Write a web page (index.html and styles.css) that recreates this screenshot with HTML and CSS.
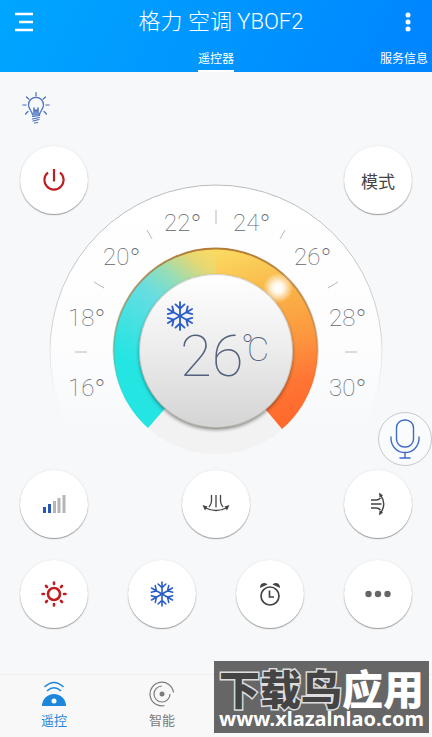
FILE: index.html
```html
<!DOCTYPE html>
<html lang="zh-CN">
<head>
<meta charset="utf-8">
<meta name="viewport" content="width=device-width, initial-scale=1">
<title>格力 空调 YBOF2</title>
<link rel="stylesheet" href="styles.css">
</head>
<body>
<svg class="symbols" aria-hidden="true">
  <symbol id="snow" viewBox="0 0 28 28">
    <g id="arms" fill="none" stroke="currentColor" stroke-width="1.7" stroke-linecap="round">
      <path id="arm" d="M14 14V1M9.800 3.200L14 7.200L18.200 3.200"/>
      <use href="#arm" transform="rotate(60 14 14)"/>
      <use href="#arm" transform="rotate(120 14 14)"/>
      <use href="#arm" transform="rotate(180 14 14)"/>
      <use href="#arm" transform="rotate(240 14 14)"/>
      <use href="#arm" transform="rotate(300 14 14)"/>
    </g>
  </symbol>
</svg>

<header class="top">
  <div class="bar">
    <button class="bar-btn" aria-label="菜单">
      <svg width="20" height="20" viewBox="0 0 20 20"><path d="M1 2H19M5 10H19M1 18H19" stroke="currentColor" stroke-width="2.400"/></svg>
    </button>
    <h1 class="title">格力 空调 YBOF2</h1>
    <button class="bar-btn bar-btn-end" aria-label="更多">
      <svg width="6" height="20" viewBox="0 0 6 20" fill="currentColor"><circle cx="3" cy="3" r="2.500"/><circle cx="3" cy="10" r="2.500"/><circle cx="3" cy="17" r="2.500"/></svg>
    </button>
  </div>
  <nav class="tabs">
    <a class="tab tab-on" href="#remote">遥控器</a>
    <a class="tab tab-end" href="#service">服务信息</a>
  </nav>
</header>

<main class="remote" id="remote">
  <button class="light" aria-label="灯光">
    <svg width="28" height="32" viewBox="0 0 28 32" fill="none" stroke="currentColor" stroke-width="1.200" stroke-linecap="round">
      <path d="M10.500 23C10.500 19 6.500 18 6.500 12.800A7.500 7.500 0 0 1 21.500 12.800C21.500 18 17.500 19 17.500 23"/>
      <path d="M14 .600V4M.800 13H4.200M23.800 13H27.200M4.500 5L7 7.200M23.500 5L21 7.200M3.500 22L6 19.500M24.500 22L22 19.500"/>
      <path d="M10.500 24.500L17.500 23.500M10.500 27L17.500 25.500M11 29L17 27.500M12.500 31L15.500 30.500"/>
      <path d="M12 16V23M16 16V23M14 18V23M12 18.500H16" stroke-width="1.500"/>
    </svg>
  </button>

  <div class="stage">
    <svg class="dial" viewBox="0 0 432 272" role="img" aria-label="26℃">
      <defs>
        <linearGradient id="face" x1="0" y1="0" x2="0" y2="1"><stop offset="0" stop-color="#fff"/><stop offset=".45" stop-color="#fdfdfe"/><stop offset=".75" stop-color="#fff" stop-opacity="0"/></linearGradient>
        <linearGradient id="rim" x1="0" y1="0" x2="0" y2="1"><stop offset="0" stop-color="#b9babc"/><stop offset=".45" stop-color="#d4d5d7"/><stop offset=".66" stop-color="#e4e5e7" stop-opacity="0"/></linearGradient>
        <linearGradient id="cool" gradientUnits="userSpaceOnUse" x1="216" y1="68" x2="128" y2="176"><stop offset="0" stop-color="#fbda62"/><stop offset=".14" stop-color="#e6d873"/><stop offset=".34" stop-color="#94ddb8"/><stop offset=".52" stop-color="#68dde0"/><stop offset="1" stop-color="#25e5e3"/></linearGradient>
        <linearGradient id="warm" gradientUnits="userSpaceOnUse" x1="216" y1="68" x2="274" y2="244"><stop offset="0" stop-color="#fbda62"/><stop offset=".3" stop-color="#f9b548"/><stop offset=".6" stop-color="#fd943e"/><stop offset=".8" stop-color="#ff7534"/><stop offset="1" stop-color="#ff692b"/></linearGradient>
        <linearGradient id="edge" x1="0" y1="0" x2="0" y2="1"><stop offset="0" stop-color="#a86a28" stop-opacity=".85"/><stop offset=".5" stop-color="#a07840" stop-opacity=".4"/><stop offset=".8" stop-color="#a07840" stop-opacity="0"/></linearGradient>
        <linearGradient id="knob" x1="0" y1="0" x2="0" y2="1"><stop offset="0" stop-color="#fff"/><stop offset=".5" stop-color="#ececec"/><stop offset="1" stop-color="#d4d4d4"/></linearGradient>
        <radialGradient id="glow"><stop offset="0" stop-color="#fff"/><stop offset=".35" stop-color="#fff" stop-opacity=".9"/><stop offset="1" stop-color="#fff" stop-opacity="0"/></radialGradient>
        <filter id="soft" x="-20%" y="-20%" width="140%" height="140%"><feGaussianBlur stdDeviation="2"/></filter>
      </defs>
      <circle cx="216" cy="167" r="166" fill="url(#face)" stroke="url(#rim)"/>
      <circle cx="216" cy="167" r="103" fill="#f2f2f2"/>
      <path d="M216 64A103 103 0 0 0 148 244L169 220A70 70 0 0 1 216 97Z" fill="url(#cool)"/>
      <path d="M215.500 64A103 103 0 0 1 282 245L261 220A70 70 0 0 0 215.500 97Z" fill="url(#warm)"/>
      <path d="M148 243A102 102 0 1 1 282 244" fill="none" stroke="url(#edge)" stroke-width="2"/>
      <circle cx="278" cy="104" r="15" fill="url(#glow)"/>
      <circle cx="216" cy="169" r="76" fill="#000" opacity=".6" filter="url(#soft)"/>
      <circle cx="216" cy="167" r="77" fill="url(#knob)"/>
      <circle cx="216" cy="167" r="76.500" fill="none" stroke="#8a7b62" stroke-opacity=".35"/>
      <path d="M216 26V40M147 46L152 55M285 46L280 55M94 98L104 104M338 98L328 104M75 168H87M345 168H357" stroke="#b9babd" fill="none"/>
      <g class="scale">
        <text x="68" y="212">16<tspan class="deg" dy="4">°</tspan></text>
        <text x="68" y="142">18<tspan class="deg" dy="4">°</tspan></text>
        <text x="103" y="81">20<tspan class="deg" dy="4">°</tspan></text>
        <text x="164" y="47">22<tspan class="deg" dy="4">°</tspan></text>
        <text x="233" y="47">24<tspan class="deg" dy="4">°</tspan></text>
        <text x="294" y="81">26<tspan class="deg" dy="4">°</tspan></text>
        <text x="329" y="142">28<tspan class="deg" dy="4">°</tspan></text>
        <text x="329" y="212">30<tspan class="deg" dy="4">°</tspan></text>
      </g>
      <use class="cold" href="#snow" x="165" y="117" width="30" height="30"/>
      <text class="temp" x="180" y="192">26</text>
      <text class="unit" x="241" y="174">°<tspan x="247" y="177">C</tspan></text>
    </svg>

    <div class="row row-top">
      <button class="key" aria-label="电源">
        <svg class="red" width="22" height="24" viewBox="0 0 22 24" fill="none" stroke="currentColor" stroke-width="2.200"><path d="M11 1V13.500M5 4.500A9.600 9.600 0 1 0 17 4.500"/></svg>
      </button>
      <button class="key key-text">模式</button>
    </div>
    <button class="mic" aria-label="语音">
      <svg width="30" height="40" viewBox="0 0 30 40" fill="none" stroke="currentColor" stroke-width="1.400"><rect x="6.500" y="1" width="17" height="27" rx="8"/><path d="M1 17.500V19.500A14 14 0 0 0 29 19.500V17.500M15 33.500V39M9.500 39H20.500"/></svg>
    </button>
  </div>

  <div class="row row-mid">
    <button class="key" aria-label="风量">
      <svg width="24" height="20" viewBox="0 0 24 20"><path d="M1 13h3v6h-3zM6 10h3v9h-3z" fill="#2557b8"/><path d="M11 7h3v12h-3zM15.500 4h3v15h-3zM20.500 1h3v18h-3z" fill="#b5b5b5"/></svg>
    </button>
    <button class="key" aria-label="左右扫风">
      <svg width="28" height="22" viewBox="0 0 28 22" fill="none" stroke="currentColor" stroke-width="1.300"><path d="M9.500 2V8Q9.500 11 7 14M14 2V14.500M18.500 2V8Q18.500 11 21 14"/><path d="M2.500 14.500Q14 20.500 25.500 14.500"/><path d="M.500 12L5.500 13.500L3 17.500ZM27.500 12L22.500 13.500L25 17.500Z" fill="currentColor" stroke="none"/></svg>
    </button>
    <button class="key" aria-label="上下扫风">
      <svg width="16" height="24" viewBox="0 0 16 24" fill="none" stroke="currentColor" stroke-width="1.400"><path d="M1 8H6Q9 8 10.500 6M1 12H11.500M1 16H6Q9 16 10.500 18M10.500 3Q17 12 10.500 21"/><path d="M9 .500L9.500 5.500L13 3.500ZM9 23.500L9.500 18.500L13 20.500Z" fill="currentColor" stroke="none"/></svg>
    </button>
  </div>

  <div class="row">
    <button class="key" aria-label="制热">
      <svg class="red" width="26" height="26" viewBox="0 0 26 26" fill="none" stroke="currentColor" stroke-width="2.600" stroke-linecap="round"><circle cx="13" cy="13" r="6"/><path d="M13 1.500V3M13 23V24.500M1.500 13H3M23 13H24.500M5 5L6 6M20 20L21 21M5 21L6 20M20 6L21 5"/></svg>
    </button>
    <button class="key" aria-label="制冷">
      <svg class="cold" width="26" height="26"><use href="#snow"/></svg>
    </button>
    <button class="key" aria-label="定时">
      <svg width="22" height="24" viewBox="0 0 22 24" fill="none" stroke="currentColor" stroke-width="1.700"><circle cx="11" cy="14" r="9"/><path d="M10.500 8.500V15H15"/><path d="M1 6Q1 1 5.500 1Q7.500 1 8.500 2.500ZM21 6Q21 1 16.500 1Q14.500 1 13.500 2.500Z" fill="currentColor" stroke="none"/></svg>
    </button>
    <button class="key" aria-label="更多功能">
      <svg width="26" height="8" viewBox="0 0 26 8" fill="#666"><circle cx="3.500" cy="4" r="3.200"/><circle cx="13" cy="4" r="3.200"/><circle cx="22.500" cy="4" r="3.200"/></svg>
    </button>
  </div>
</main>

<footer class="foot">
  <nav class="nav">
    <a class="nav-item nav-on" href="#remote">
      <svg width="26" height="26" viewBox="0 0 26 26"><path d="M1 25A12 12 0 0 1 25 25Z" fill="currentColor"/><circle cx="13" cy="20" r="2.500" fill="#fff"/><path d="M3.500 6Q13-3 22.500 6M6 10Q13 3.500 20 10" fill="none" stroke="currentColor" stroke-width="1.500"/></svg>
      遥控
    </a>
    <a class="nav-item" href="#smart">
      <svg width="26" height="26" viewBox="0 0 26 26" fill="none" stroke="currentColor" stroke-width="1.200"><path d="M24.500 11.500A11.800 11.800 0 1 0 15.500 24.500"/><path d="M13 5A8 8 0 1 0 21 13"/><circle cx="13" cy="13" r="2.500" fill="currentColor" stroke="none"/></svg>
      智能
    </a>
  </nav>
  <aside class="stamp">
    <p class="stamp-name"><span class="stamp-dark">下载鸟</span>应用</p>
    <p class="stamp-url">www.xlazalnlao.com</p>
  </aside>
</footer>
</body>
</html>
```

FILE: styles.css
```css
* { box-sizing: border-box; }

body {
  margin: 0;
  min-height: 100vh;
  display: flex;
  flex-direction: column;
  background: #f6f8fa;
  color: #444;
  font-family: Roboto, "Noto Sans CJK SC", sans-serif;
}

button {
  padding: 0;
  border: 0;
  background: none;
  color: inherit;
  font: inherit;
}

a { color: inherit; text-decoration: none; }
svg { display: block; }
.symbols { position: absolute; width: 0; height: 0; }
.red { color: #c01d20; }
.cold { color: #2a5cc8; }

.top {
  background: linear-gradient(115deg, #00a6ff, #0096ff 50%, #0084ff);
  color: #fff;
}

.bar {
  display: grid;
  grid-template-columns: 48px 1fr 48px;
  align-items: center;
  height: 44px;
}

.bar-btn { display: grid; place-items: center; height: 44px; }

.title {
  margin: 0;
  text-align: center;
  font-size: 22px;
  font-weight: 300;
  line-height: 44px;
  padding-left: 10px;
}

.tabs {
  display: grid;
  grid-template-columns: 1fr auto 1fr;
  font-size: 12px;
  line-height: 24px;
  height: 28px;
  padding-top: 3px;
}

.tab-on { grid-column: 2; border-bottom: 2px solid #fff; height: 25px; }
.tab-end { justify-self: end; padding-right: 4px; }

.remote { flex: 1; }

.light {
  display: block;
  margin: 20px 0 0 22px;
  color: #4a70bd;
}

.stage { display: grid; margin-top: 22px; }
.stage > * { grid-area: 1 / 1; }

.dial {
  width: 100%;
  max-width: 560px;
  margin: 38px auto 0;
}

.scale { font-family: Roboto, sans-serif; font-size: 24px; font-weight: 100; fill: #62656b; }
.deg { font-size: 30px; }
.temp { font-size: 58px; font-weight: 100; fill: #53617c; }
.unit { font-size: 34px; font-weight: 100; fill: #53617c; }

.row {
  display: grid;
  grid-template-columns: repeat(4, 1fr);
  justify-items: center;
  align-self: start;
}

.row-top .key-text { grid-column: 4; }
.row-mid { grid-template-columns: 1fr 2fr 1fr; margin: 14px 0 22px; }

.key {
  display: grid;
  place-items: center;
  width: 68px;
  height: 68px;
  border-radius: 50%;
  background: #fff;
  box-shadow: 0 1px 1px #999, 0 0 2px #e0e2e4;
}

.key-text { font-size: 17px; }

.mic {
  display: grid;
  place-items: center;
  place-self: end;
  width: 54px;
  height: 54px;
  margin-bottom: -10px;
  border: 1px solid #c4c8d0;
  border-radius: 50%;
  background: #fafbfd;
  color: #3f6bc4;
}

.foot {
  position: relative;
  border-top: 1px solid #eeeff0;
  background: #f8f8f9;
}

.nav { display: grid; grid-template-columns: repeat(4, 1fr); height: 62px; }

.nav-item {
  display: flex;
  flex-direction: column;
  align-items: center;
  padding-top: 6px;
  gap: 4px;
  color: #7c7c7c;
  font-size: 13px;
  line-height: 20px;
}

.nav-on { color: #1b86dc; }

.stamp {
  position: absolute;
  right: 3px;
  bottom: 4px;
  width: 215px;
  height: 72px;
  background: #666;
  color: #fff;
  text-align: center;
  white-space: nowrap;
}

.stamp p { margin: 0; }

.stamp-name {
  padding-top: 6px;
  font-family: "Noto Sans CJK SC", sans-serif;
  font-size: 41px;
  font-weight: 900;
  line-height: 40px;
}

.stamp-dark { color: #444; -webkit-text-stroke: 3px #ddd; paint-order: stroke fill; }

.stamp-url {
  font-family: "Noto Sans", sans-serif;
  font-size: 20px;
  font-weight: 700;
  line-height: 24px;
}
```
